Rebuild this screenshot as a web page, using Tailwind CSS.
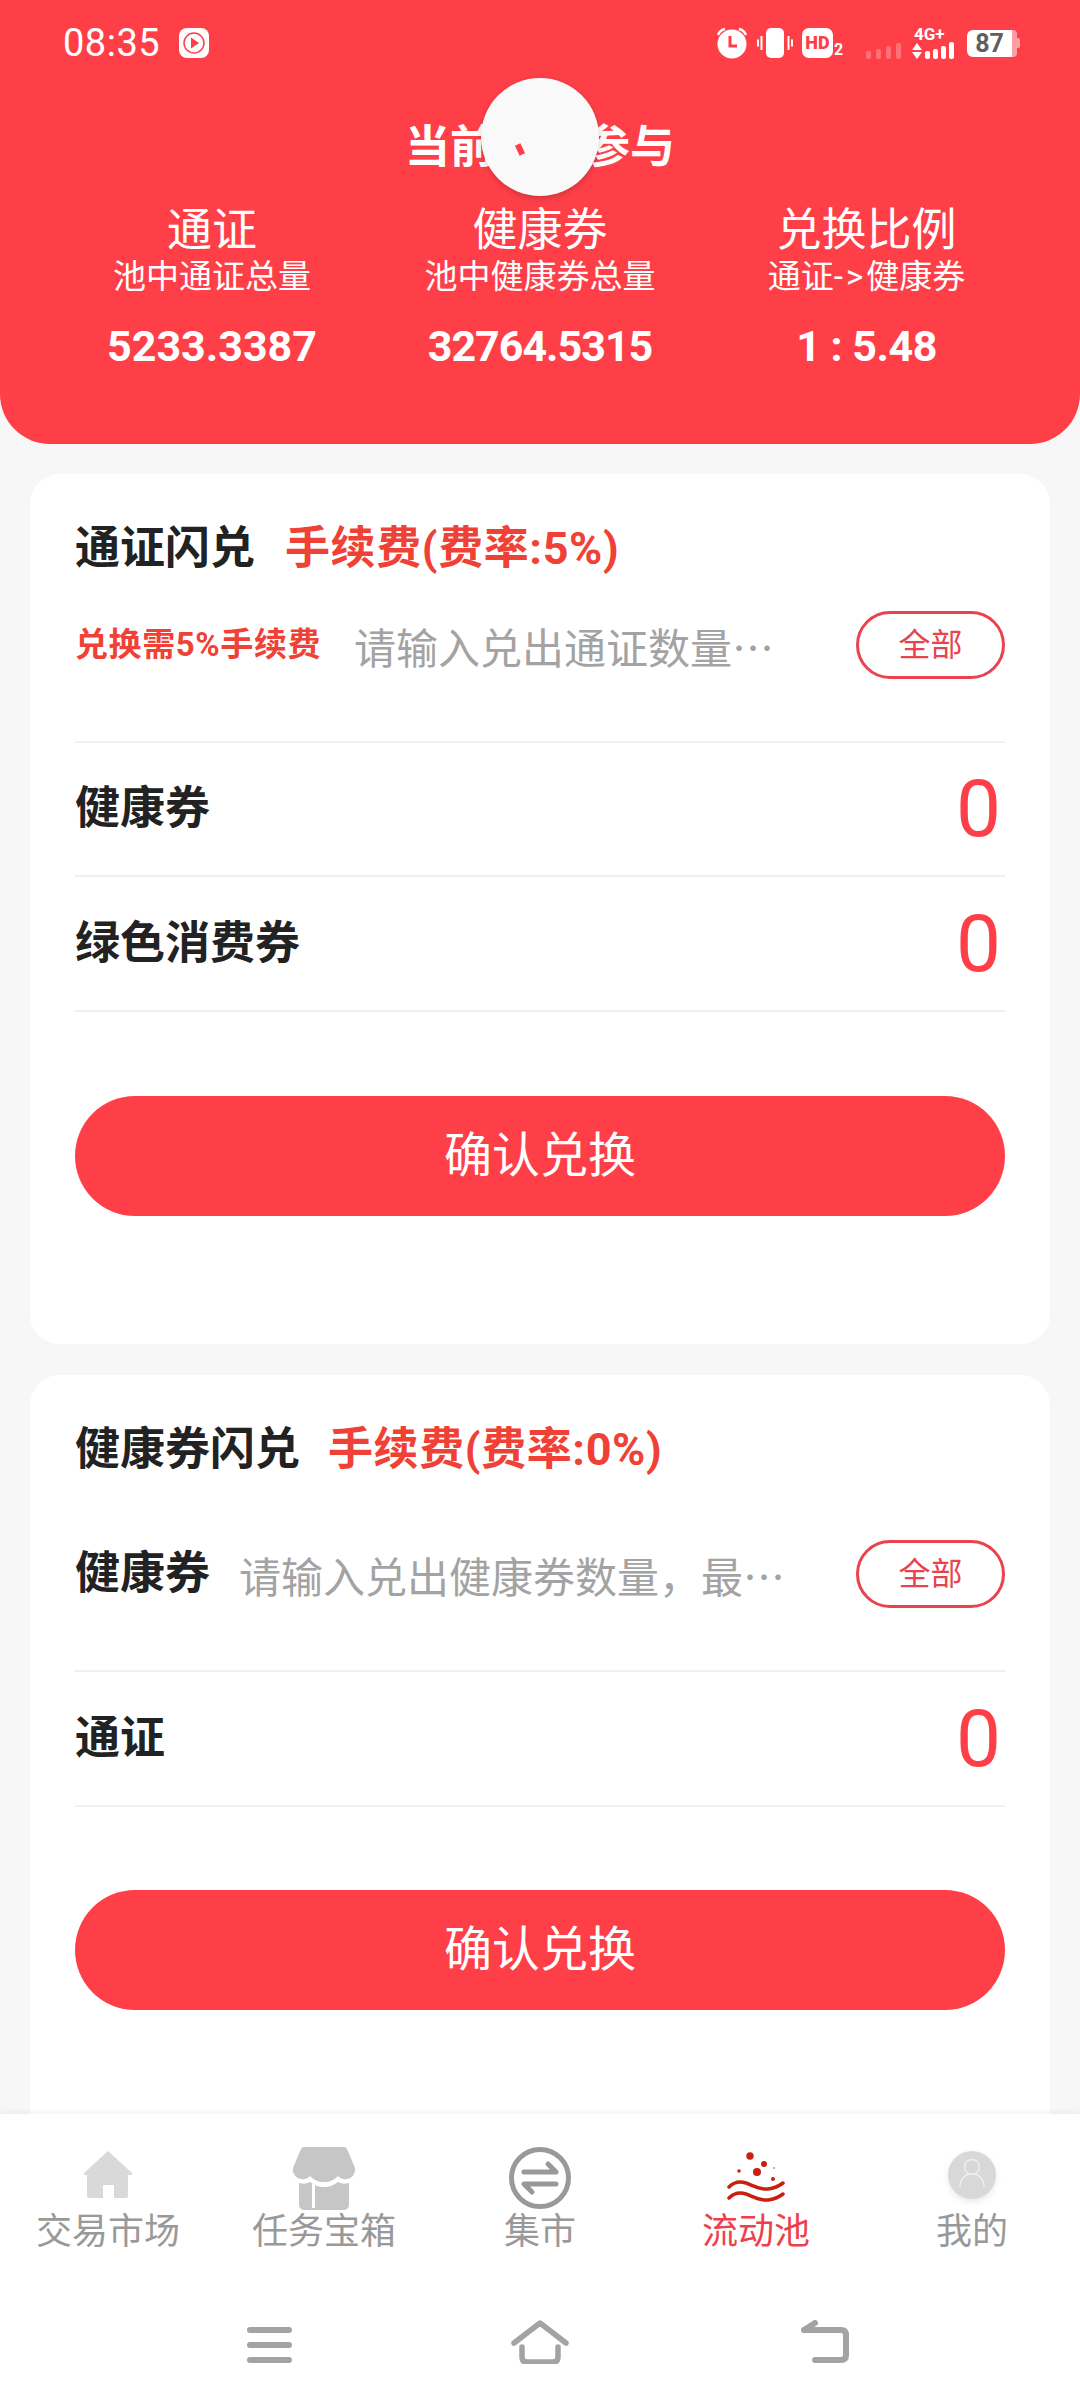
<!DOCTYPE html>
<html lang="zh-CN">
<head>
    <meta charset="UTF-8">
    <meta name="viewport" content="width=device-width, initial-scale=1.0">
    <title>流动池</title>
    <script src="https://cdn.jsdelivr.net/npm/@tailwindcss/browser@4"></script>
</head>
<body class="bg-[#f7f7f7] font-['Roboto','Noto_Sans_CJK_SC',sans-serif]">
<div class="relative w-[1080px] h-[2408px] overflow-hidden flex flex-col">
    <div class="flex-1 overflow-hidden">
        <!-- header -->
        <div class="h-[444px] bg-[#ff3f48] rounded-b-[50px] text-white">
            <div class="h-[86px] flex items-center justify-between pl-[63px] pr-[60px]">
                <div class="flex items-center gap-[19px]">
                    <span class="text-[38px] leading-none tracking-[0.5px]">08:35</span>
                    <svg class="w-[30px] h-[30px]" viewBox="0 0 30 30"><rect width="30" height="30" rx="8" fill="#fff"/><circle cx="15" cy="15" r="10" fill="none" stroke="#ff3f48" stroke-width="1.5"/><path d="M12 9.500 20 15l-8 5.500z" fill="#ff3f48"/></svg>
                </div>
                <div class="flex items-center h-[32px]">
                    <svg class="w-[34px] h-[32px]" viewBox="0 0 34 32"><circle cx="17" cy="17" r="14.500" fill="#fff"/><path d="M3 8q2-5 7-6M31 8q-2-5-7-6" stroke="#fff" stroke-width="2.500" fill="none"/><path d="M15 9v10h7" stroke="#ff3f48" stroke-width="3" fill="none"/></svg>
                    <svg class="w-[36px] h-[32px] ml-[8px]" viewBox="0 0 36 32"><rect x="9" y="1" width="18" height="30" rx="5" fill="#fff"/><path d="M4.500 9v14M1 12.500v7M31.500 9v14M35 12.500v7" stroke="#fff" stroke-width="2"/></svg>
                    <div class="ml-[9px] w-[31px] h-[30px] rounded-[7px] bg-white text-[#ff3f48] text-[18px] font-black leading-[30px] text-center">HD</div>
                    <span class="ml-[1px] self-end text-[16px] font-bold leading-[18px] w-[11px]">2</span>
                    <div class="flex items-end gap-[5px] h-[16px] ml-[21px] self-end opacity-25">
                        <span class="w-[5px] h-[8px] bg-white rounded-[2px]"></span>
                        <span class="w-[5px] h-[10px] bg-white rounded-[2px]"></span>
                        <span class="w-[5px] h-[13px] bg-white rounded-[2px]"></span>
                        <span class="w-[5px] h-[16px] bg-white rounded-[2px]"></span>
                    </div>
                    <div class="ml-[11px] flex flex-col w-[46px]">
                        <span class="text-[17px] font-bold leading-[15px] pl-[2px]">4G+</span>
                        <div class="flex items-end gap-[3px] h-[17px]">
                            <svg class="w-[10px] h-[16px]" viewBox="0 0 10 16"><path d="M5 0 10 7H0zM0 9h10l-5 7z" fill="#fff"/></svg>
                            <span class="w-[5px] h-[8px] bg-white rounded-[2px]"></span>
                            <span class="w-[5px] h-[10px] bg-white rounded-[2px]"></span>
                            <span class="w-[5px] h-[13px] bg-white rounded-[2px]"></span>
                            <span class="w-[5px] h-[17px] bg-white rounded-[2px]"></span>
                        </div>
                    </div>
                    <div class="ml-[9px] flex items-center">
                        <div class="w-[45px] h-[27px] rounded-l-[6px] bg-white text-[#5f5f5f] text-[25px] font-bold leading-[27px] text-center">87</div>
                        <div class="w-[5px] h-[27px] rounded-r-[4px] bg-white/50"></div>
                        <div class="w-[3px] h-[10px] rounded-r-[2px] bg-white/50"></div>
                    </div>
                </div>
            </div>
            <div class="text-center text-[45px] font-bold leading-[60px] mt-[32px]">当前人数参与</div>
            <div class="grid grid-cols-3 mt-[26px] px-[48px] text-center">
                <div>
                    <div class="text-[45px] leading-[54px]">通证</div>
                    <div class="text-[33px] leading-[38px]">池中通证总量</div>
                    <div class="text-[43px] font-bold leading-[52px] mt-[24px]">5233.3387</div>
                </div>
                <div>
                    <div class="text-[45px] leading-[54px]">健康券</div>
                    <div class="text-[33px] leading-[38px]">池中健康券总量</div>
                    <div class="text-[43px] font-bold leading-[52px] mt-[24px] tracking-[-1px]">32764.5315</div>
                </div>
                <div class="-ml-[3px]">
                    <div class="text-[45px] leading-[54px]">兑换比例</div>
                    <div class="text-[33px] leading-[38px]">通证<span class="tracking-[3px]">-&gt;</span>健康券</div>
                    <div class="text-[43px] font-bold leading-[52px] mt-[24px] tracking-[-0.5px]">1 : 5.48</div>
                </div>
            </div>
        </div>

        <!-- 通证闪兑 -->
        <div class="mx-[30px] mt-[30px] h-[870px] bg-white rounded-[30px] px-[45px] pt-[51px]">
            <div class="flex items-center h-[48px] gap-[30px]">
                <span class="text-[45px] font-bold text-[#222]">通证闪兑</span>
                <span class="text-[45px] font-bold text-[#ef4136] tracking-[0.6px]">手续费(费率:5%)</span>
            </div>
            <div class="flex items-center h-[68px] mt-[38px]">
                <span class="text-[33px] font-bold text-[#ef4136] w-[281px] tracking-[0.6px]">兑换需5%手续费</span>
                <span class="flex-1 text-[42px] text-[#a3a3a3] font-['Noto_Sans_CJK_SC',sans-serif] -ml-[2px]">请输入兑出通证数量…</span>
                <span class="w-[149px] h-[68px] rounded-full border-[3px] border-[#e8434e] text-[#e8434e] text-[32px] flex items-center justify-center">全部</span>
            </div>
            <div class="h-[2px] bg-[#f0f0f0] mt-[62px]"></div>
            <div class="flex items-center justify-between h-[134px] border-b-2 border-[#f0f0f0]">
                <span class="text-[45px] font-bold text-[#222]">健康券</span>
                <span class="text-[80px] text-[#ff3f48] pr-[4px]">0</span>
            </div>
            <div class="flex items-center justify-between h-[135px] border-b-2 border-[#f0f0f0]">
                <span class="text-[45px] font-bold text-[#222]">绿色消费券</span>
                <span class="text-[80px] text-[#ff3f48] pr-[4px]">0</span>
            </div>
            <div class="h-[120px] mt-[84px] rounded-full bg-[#ff3f48] text-white text-[48px] flex items-center justify-center">确认兑换</div>
        </div>

        <!-- 健康券闪兑 -->
        <div class="mx-[30px] mt-[31px] h-[900px] bg-white rounded-[30px] px-[45px] pt-[51px]">
            <div class="flex items-center h-[48px] gap-[28px]">
                <span class="text-[45px] font-bold text-[#222]">健康券闪兑</span>
                <span class="text-[45px] font-bold text-[#ef4136] tracking-[0.6px]">手续费(费率:0%)</span>
            </div>
            <div class="flex items-center h-[68px] mt-[66px]">
                <span class="text-[45px] font-bold text-[#222] w-[164px]">健康券</span>
                <span class="flex-1 text-[42px] text-[#a3a3a3] font-['Noto_Sans_CJK_SC',sans-serif]">请输入兑出健康券数量，最…</span>
                <span class="w-[149px] h-[68px] rounded-full border-[3px] border-[#e8434e] text-[#e8434e] text-[32px] flex items-center justify-center">全部</span>
            </div>
            <div class="h-[2px] bg-[#f0f0f0] mt-[62px]"></div>
            <div class="flex items-center justify-between h-[135px] border-b-2 border-[#f0f0f0]">
                <span class="text-[45px] font-bold text-[#222]">通证</span>
                <span class="text-[80px] text-[#ff3f48] pr-[4px]">0</span>
            </div>
            <div class="h-[120px] mt-[83px] rounded-full bg-[#ff3f48] text-white text-[48px] flex items-center justify-center">确认兑换</div>
        </div>
    </div>

    <!-- tab bar -->
    <div class="h-[294px] bg-white shadow-[0_-2px_6px_rgba(0,0,0,0.05)]">
        <div class="grid grid-cols-5 pt-[32px] text-[36px] text-[#999] text-center leading-[44px]">
            <div class="flex flex-col items-center">
                <svg class="w-[64px] h-[64px]" viewBox="0 0 64 64"><path d="M32 5 56 27v2h-4v21q0 2-2 2H38V39H27v13H13q-2 0-2-2V29H8v-2z" fill="#d9d9d9"/></svg>
                <span>交易市场</span>
            </div>
            <div class="flex flex-col items-center">
                <svg class="w-[64px] h-[64px]" viewBox="0 0 64 64"><path d="M12 1h40a3 3 0 0 1 3 2l8 19a8 8 0 0 1-1 6c-3 6-11 7-16 2c-4 4-8 6-14 6s-10-2-14-6c-5 5-13 4-16-2a8 8 0 0 1-1-6l8-19a3 3 0 0 1 3-2z" fill="#c6c6c6"/><path d="M7 37q6 2 11-1 6 5 14 5t14-5q5 3 11 1v21q0 6-6 6H13q-6 0-6-6z" fill="#c6c6c6"/><rect x="20" y="38" width="3" height="24" fill="#fff"/></svg>
                <span>任务宝箱</span>
            </div>
            <div class="flex flex-col items-center">
                <svg class="w-[64px] h-[64px]" viewBox="0 0 64 64"><circle cx="32" cy="32" r="28.500" fill="none" stroke="#999" stroke-width="5"/><path d="M16 26h32l-8-8M48 38H16l8 8" fill="none" stroke="#999" stroke-width="5" stroke-linecap="round" stroke-linejoin="round"/></svg>
                <span>集市</span>
            </div>
            <div class="flex flex-col items-center text-[#ee3f4d]">
                <svg class="w-[64px] h-[64px]" viewBox="0 0 64 64"><g fill="#c9200e"><circle cx="26" cy="10" r="3.700"/><circle cx="40" cy="18" r="3"/><circle cx="33" cy="26" r="4"/><circle cx="15" cy="25" r="1.800"/><circle cx="50" cy="22" r="0.800"/><circle cx="49" cy="33" r="2"/></g><path d="M5 41C10 36 16 35 22 37S36 44 44 43 55 40 59 37M5 52C10 47 16 46 22 48S36 55 44 54 55 51 59 48" fill="none" stroke="#c9200e" stroke-width="3.500" stroke-linecap="round"/></svg>
                <span>流动池</span>
            </div>
            <div class="flex flex-col items-center">
                <svg class="w-[64px] h-[64px] drop-shadow-[0_3px_3px_rgba(0,0,0,0.08)]" viewBox="0 0 64 64"><circle cx="32" cy="29" r="24" fill="#d8d8d8"/><circle cx="32" cy="21" r="7.500" fill="none" stroke="#eee" stroke-width="1.500"/><path d="M20 41q1-13 12-13t12 13" fill="none" stroke="#eee" stroke-width="1.500" stroke-linecap="round"/></svg>
                <span>我的</span>
            </div>
        </div>
        <div class="flex pl-[247px] mt-[66px]">
            <svg class="w-[45px] h-[44px]" viewBox="0 0 45 44"><path d="M3 10h39M3 25h39M3 40h39" stroke="#a3a3a3" stroke-width="6" stroke-linecap="round"/></svg>
            <svg class="w-[58px] h-[44px] ml-[219px]" viewBox="0 0 58 44"><path d="M3 23 29 3l26 20M11 27v10q0 5 5 5h26q5 0 5-5V27" fill="none" stroke="#a3a3a3" stroke-width="5.500" stroke-linecap="round" stroke-linejoin="round"/></svg>
            <svg class="w-[48px] h-[44px] ml-[232px]" viewBox="0 0 48 44"><path d="M3 10h37q5 0 5 5v20q0 5-5 5H14M3 10 14 3" fill="none" stroke="#a3a3a3" stroke-width="6" stroke-linecap="round" stroke-linejoin="round"/></svg>
        </div>
    </div>

    <!-- floating loading circle -->
    <div class="absolute left-[481px] top-[78px] w-[118px] h-[118px] rounded-full bg-[#f9f9f9] shadow-[0_2px_6px_rgba(0,0,0,0.2)] flex items-center justify-center">
        <span class="block w-[6px] h-[11px] bg-[#ff3f48] -rotate-[25deg] -ml-[40px] mt-[24px]"></span>
    </div>
</div>
</body>
</html>
